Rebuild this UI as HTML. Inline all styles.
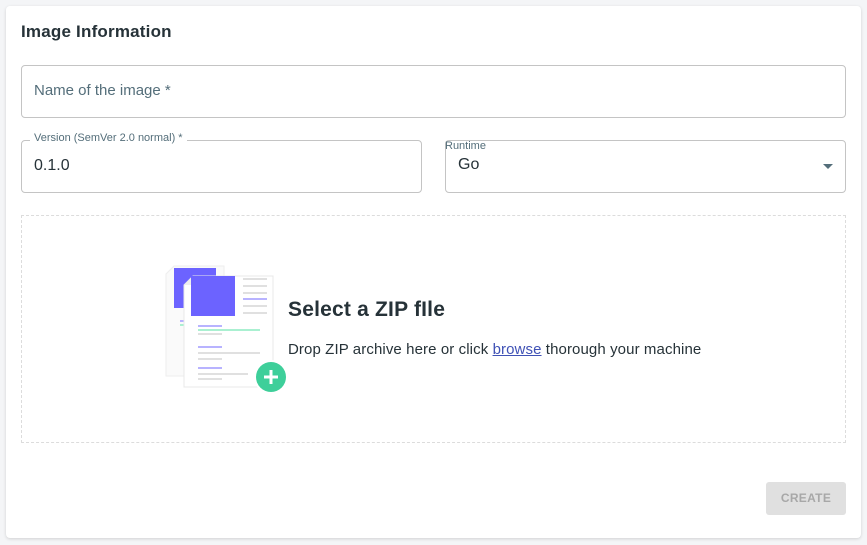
<!DOCTYPE html><html><head><style>
body{margin:0;width:867px;height:545px;background:#f4f5f7;font-family:"Liberation Sans",sans-serif;position:relative;overflow:hidden}
.card{position:absolute;left:6px;top:6px;width:855px;height:532px;background:#fff;border-radius:4px;box-shadow:0 1px 3px rgba(0,0,0,.15)}
.a{position:absolute;white-space:nowrap}
.f{position:absolute;border:1px solid #c4c4c4;border-radius:4px;box-sizing:border-box}
</style></head><body>
<div class="card"></div>
<div class="a" style="left:21px;top:22px;font-size:17px;color:#263238;font-weight:bold;letter-spacing:0.2px">Image Information</div>
<div class="f" style="left:21px;top:65px;width:825px;height:53px"></div>
<div class="a" style="left:34px;top:82px;font-size:15px;color:#546e7a">Name of the image *</div>
<div class="f" style="left:21px;top:140px;width:401px;height:53px"></div>
<div class="a" style="left:30px;top:132px;font-size:11px;color:#546e7a;background:#fff;padding:0 4px">Version (SemVer 2.0 normal) *</div>
<div class="a" style="left:34px;top:157px;font-size:16px;color:#263238">0.1.0</div>
<div class="f" style="left:445px;top:140px;width:401px;height:53px"></div>
<div class="a" style="left:445px;top:140px;font-size:11px;color:#546e7a">Runtime</div>
<div class="a" style="left:458px;top:156px;font-size:16px;color:#263238">Go</div>
<div class="a" style="left:823px;top:164px;width:0;height:0;border-left:5px solid transparent;border-right:5px solid transparent;border-top:5px solid #546e7a"></div>
<div class="a" style="left:21px;top:215px;width:825px;height:228px;border:1px dashed #dcdcdc;box-sizing:border-box"></div>
<svg class="a" style="left:160px;top:260px" width="130" height="136">
<path d="M14 6 H64 V116 H6 V14 Z" fill="#fafafa" stroke="#eee"/>
<rect x="14" y="8" width="42" height="40" fill="#6c63ff"/>
<rect x="20" y="60" width="18" height="2" fill="#b8b3ff"/><rect x="20" y="64" width="30" height="2" fill="#aaf0d1"/>
<path d="M33 16 H113 V127 H24 V25 Z" fill="#fff" stroke="#e8e8e8"/>
<path d="M24 25 L33 16 V25 Z" fill="#eee"/>
<rect x="31" y="16" width="44" height="40" fill="#6c63ff"/>
<g fill="#e0e0e0"><rect x="83" y="18" width="24" height="2"/><rect x="83" y="25" width="24" height="2"/><rect x="83" y="32" width="24" height="2"/><rect x="83" y="45" width="24" height="2"/><rect x="83" y="52" width="24" height="2"/>
<rect x="38" y="73" width="24" height="2"/><rect x="38" y="92" width="62" height="2"/><rect x="38" y="98" width="24" height="2"/><rect x="38" y="113" width="50" height="2"/><rect x="38" y="118" width="24" height="2"/></g>
<g fill="#b8b3ff"><rect x="83" y="38" width="24" height="2"/><rect x="38" y="65" width="24" height="2"/><rect x="38" y="86" width="24" height="2"/><rect x="38" y="107" width="24" height="2"/></g>
<rect x="38" y="69" width="62" height="2" fill="#aaf0d1"/>
<circle cx="111" cy="117" r="17" fill="#fff"/><circle cx="111" cy="117" r="15" fill="#3ecf9a"/>
<rect x="104" y="115.5" width="14" height="3" fill="#fff"/><rect x="109.5" y="110" width="3" height="14" fill="#fff"/>
</svg>
<div class="a" style="left:288px;top:298px;font-size:21px;color:#263238;font-weight:bold;letter-spacing:0.2px">Select a ZIP fIle</div>
<div class="a" style="left:288px;top:341px;font-size:15px;color:#263238;letter-spacing:0.1px">Drop ZIP archive here or click <span style="color:#3f51b5;text-decoration:underline">browse</span> thorough your machine</div>
<div class="a" style="left:766px;top:482px;width:80px;height:33px;background:#e0e0e0;border-radius:3px;color:#a8a8a8;font-size:12px;font-weight:bold;text-align:center;line-height:33px;letter-spacing:.3px">CREATE</div>
</body></html>
